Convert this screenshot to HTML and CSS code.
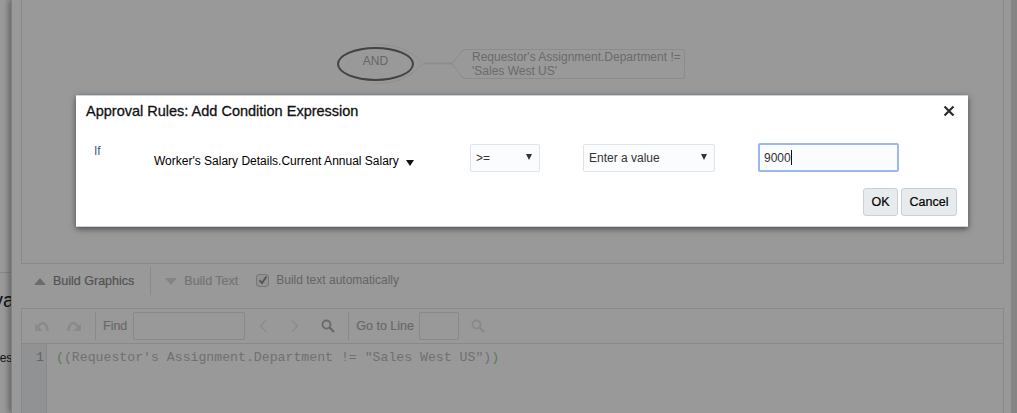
FILE: index.html
```html
<!DOCTYPE html>
<html lang="en">
<head>
<meta charset="utf-8">
<title>Approval Rules: Add Condition Expression</title>
<link rel="stylesheet" href="styles.css">
</head>
<body>
<div class="page">
  <aside class="side">
    <div class="side-rule"></div>
    <div class="side-heading">va</div>
    <div class="side-label">Des</div>
  </aside>
  <main class="panel">
    <section class="canvas">
      <svg class="edge" width="480" height="100" viewBox="22 0 480 100"><path d="M375 44.500 C398 44.500 410 50 423 63.500 C410 77 398 83.500 375 83.500" fill="none" stroke="#efefef" stroke-width="1"/><path d="M424 63.500 H452" fill="none" stroke="#e6edf6" stroke-width="2"/><path d="M464 50.500 L462 51 L452 63.500 L462 77 L464 78" fill="none" stroke="#e9e9e9" stroke-width="1"/></svg>
      <div class="node-and">AND</div>
      <div class="node-cond">Requestor's Assignment.Department != 'Sales West US'</div>
    </section>
    <div class="build-bar">
      <button class="build-btn"><span class="tri tri-up"></span>Build Graphics</button>
      <span class="bar-sep"></span>
      <button class="build-btn is-disabled"><span class="tri tri-down"></span>Build Text</button>
      <label class="auto-check">
        <span class="check-box"><svg width="10" height="10" viewBox="0 0 10 10"><path d="M1.500 5.200 L4 8 L8.500 1.500" fill="none" stroke="#8a8a8a" stroke-width="1.800"/></svg></span>
        Build text automatically
      </label>
    </div>
    <section class="editor">
      <div class="ed-tools">
        <svg class="ed-icon" width="14" height="12" viewBox="0 0 14 12"><path d="M3.500 7 C4.500 2 12 .500 12.500 11" fill="none" stroke="#e6e6e6" stroke-width="2.500"/><path d="M0 3.500 L0 11 L8 11 Z" fill="#e6e6e6"/></svg>
        <svg class="ed-icon ed-redo" width="14" height="12" viewBox="0 0 14 12"><path d="M10.500 7 C9.500 2 2 .500 1.500 11" fill="none" stroke="#e6e6e6" stroke-width="2.500"/><path d="M14 3.500 L14 11 L6 11 Z" fill="#e6e6e6"/></svg>
        <span class="ed-sep"></span>
        <span class="ed-label">Find</span>
        <span class="ed-input ed-input-find"></span>
        <svg class="ed-chev" width="10" height="14" viewBox="0 0 10 14"><path d="M8 1.500 L2.500 7 L8 12.500" fill="none" stroke="#e8e8e8" stroke-width="1.500"/></svg>
        <svg class="ed-chev ed-next" width="10" height="14" viewBox="0 0 10 14"><path d="M2 1.500 L7.500 7 L2 12.500" fill="none" stroke="#e8e8e8" stroke-width="1.500"/></svg>
        <svg class="ed-search" width="14" height="14" viewBox="0 0 14 14"><circle cx="5.500" cy="5.500" r="4" fill="none" stroke="#b0b0b0" stroke-width="1.800"/><path d="M8.500 8.500 L13 13" stroke="#b0b0b0" stroke-width="2.400"/></svg>
        <span class="ed-sep ed-sep-b"></span>
        <span class="ed-label">Go to Line</span>
        <span class="ed-input ed-input-line"></span>
        <svg class="ed-search ed-search-off" width="14" height="14" viewBox="0 0 14 14"><circle cx="5.500" cy="5.500" r="4" fill="none" stroke="#e4e4e4" stroke-width="1.800"/><path d="M8.500 8.500 L13 13" stroke="#e4e4e4" stroke-width="2.400"/></svg>
      </div>
      <div class="ed-body">
        <div class="gutter">1</div>
        <code class="code"><span class="paren">(</span>(Requestor's Assignment.Department != "Sales West US")<span class="paren">)</span></code>
      </div>
    </section>
  </main>
  <div class="right-strip"></div>
</div>

<div class="backdrop"></div>

<div class="dialog" role="dialog">
  <header class="dlg-head">
    <h1 class="dlg-title">Approval Rules: Add Condition Expression</h1>
    <svg class="dlg-close" width="12" height="12" viewBox="0 0 12 12"><path d="M1.500 1.500 L10.500 10.500 M10.500 1.500 L1.500 10.500" stroke="#2c2c2c" stroke-width="2.200"/></svg>
  </header>
  <div class="dlg-row">
    <span class="dlg-if">If</span>
    <span class="attr">Worker's Salary Details.Current Annual Salary<span class="attr-caret"></span></span>
    <span class="select select-op">&gt;=<span class="sel-caret"></span></span>
    <span class="select select-type">Enter a value<span class="sel-caret"></span></span>
    <span class="value-input">9000<span class="cursor"></span></span>
  </div>
  <div class="dlg-actions">
    <button class="btn btn-ok">OK</button>
    <button class="btn btn-cancel">Cancel</button>
  </div>
</div>
</body>
</html>
```
FILE: styles.css
```css
* { box-sizing: border-box; }
html, body { margin: 0; height: 413px; overflow: hidden; }
body { background: #fff; font-family: "Liberation Sans", Arial, sans-serif; font-size: 12px; color: #333; position: relative; }
button { font: inherit; }

.page { display: flex; height: 413px; width: 1017px; }
.side { width: 11px; flex: none; overflow: hidden; padding-top: 272px; }
.side-rule { height: 1px; background: #e3e3e3; }
.side-heading { font-size: 20px; line-height: 24px; margin: 15px 0 0 -7px; color: #222; width: 40px; }
.side-label { font-size: 12px; line-height: 14px; margin: 39px 0 0 -9px; color: #222; width: 40px; }

.panel { flex: 1; min-width: 0; padding: 0 7px 0 9px; border-left: 1px solid #d8d8d8; box-shadow: -3px 0 5px rgba(0,0,0,.3); background: #fff; }
.right-strip { width: 6px; flex: none; background: #dedede; }

.canvas { position: relative; height: 264px; border: 1px solid #e4e4e4; border-top: 0; }
.edge { position: absolute; left: 0; top: 0; }
.node-and { position: absolute; left: 315px; top: 47px; width: 77px; height: 34px; border: 2px solid #707070; border-radius: 50%; text-align: center; line-height: 24px; color: #aaa; font-size: 12px; }
.node-cond { position: absolute; left: 440px; top: 49px; width: 223px; height: 30px; padding: 0 0 0 9px; border: 1px solid #e9e9e9; border-left-color: transparent; border-radius: 3px; line-height: 14px; color: #b2b2b2; font-size: 12px; }

.build-bar { display: flex; align-items: center; height: 44px; padding: 0 0 10px 13px; }
.build-btn { display: flex; align-items: center; border: 0; background: none; padding: 0; color: #8a8a8a; font-size: 12.500px; -webkit-text-stroke: .2px currentColor; }
.tri { width: 0; height: 0; border-left: 6px solid transparent; border-right: 6px solid transparent; margin-right: 7px; }
.tri-up { border-bottom: 7px solid #b5b5b5; }
.tri-down { border-top: 7px solid #dcdcdc; }
.build-btn.is-disabled { color: #c2c2c2; }
.bar-sep { width: 1px; height: 28px; background: #e4e4e4; margin: 0 14px 0 16px; }
.auto-check { display: flex; align-items: center; margin-left: 18px; color: #a8a8a8; position: relative; top: -1px; }
.check-box { display: flex; align-items: center; justify-content: center; width: 13px; height: 13px; margin-right: 7px; border: 1px solid #c6c6c6; border-radius: 3px; background: #f4f4f4; }

.editor { height: 105px; border: 1px solid #e4e4e4; border-bottom: 0; }
.ed-tools { display: flex; align-items: center; height: 35px; border-bottom: 1px solid #e4e4e4; padding-left: 13px; }
.ed-icon { flex: none; }
.ed-redo { margin-left: 18px; }
.ed-sep { width: 1px; height: 28px; background: #e4e4e4; margin: 0 7px 0 14px; }
.ed-sep-b { margin: 0 7px 0 13px; }
.ed-label { color: #b0b0b0; font-size: 12.500px; -webkit-text-stroke: .2px currentColor; }
.ed-input { height: 28px; border: 1px solid #e4e4e4; border-radius: 2px; background: #fff; }
.ed-input-find { width: 112px; margin-left: 6px; }
.ed-input-line { width: 40px; margin-left: 5px; }
.ed-chev { margin-left: 13px; }
.ed-next { margin-left: 22px; }
.ed-search { margin-left: 21px; }
.ed-search-off { margin-left: 12px; }

.ed-body { display: flex; height: 69px; }
.gutter { width: 25px; flex: none; background: #f0f3f7; border-right: 1px solid #e4e4e4; text-align: right; padding-right: 2px; font: 13.200px/28px "Liberation Mono", monospace; color: #a8a8a8; }
.code { font: 13.200px/28px "Liberation Mono", monospace; color: #bbb; margin-left: 9px; white-space: pre; }
.paren { color: #8fd48f; }

.backdrop { position: absolute; inset: 0; background: rgba(0,0,0,.4); }

.dialog { position: absolute; left: 76px; top: 95px; width: 892px; height: 132px; background: #fff; border: 1px solid #c9d3de; border-width: 1px 0 1px 0; box-shadow: 0 2px 6px rgba(0,0,0,.5); padding: 0 10px; display: flex; flex-direction: column; }
.dlg-head { display: flex; align-items: center; justify-content: space-between; height: 30px; padding-right: 3px; }
.dlg-title { margin: 0; font-size: 14.500px; font-weight: 400; color: #111; -webkit-text-stroke: .3px currentColor; }
.dlg-row { display: flex; align-items: flex-start; margin-top: 18px; height: 28px; }
.dlg-if { width: 68px; padding-left: 8px; color: #4a6070; }
.attr { display: flex; align-items: center; width: 316px; margin-top: 10px; color: #000; }
.attr-caret { width: 0; height: 0; margin: 3px 0 0 7px; border-left: 4.500px solid transparent; border-right: 4.500px solid transparent; border-top: 6px solid #111; }
.select { display: flex; align-items: center; justify-content: space-between; height: 28px; padding: 0 7px 0 5px; border: 1px solid #dfe4ea; border-radius: 2px; background: #fbfcfd; color: #333; }
.select-op { width: 70px; }
.select-type { width: 132px; margin-left: 43px; }
.sel-caret { width: 0; height: 0; border-left: 3.500px solid transparent; border-right: 3.500px solid transparent; border-top: 6px solid #333; margin-top: -2px; }
.value-input { display: flex; align-items: center; width: 141px; height: 29px; margin: -1px 0 0 43px; padding-left: 4px; border: 2px solid #9ab8ec; border-radius: 2px; background: #fbfcfd; color: #333; }
.cursor { width: 1px; height: 15px; background: #111; }
.dlg-actions { display: flex; justify-content: flex-end; gap: 3px; margin-top: 16px; padding-right: 1px; }
.btn { height: 28px; padding: 0; border: 1px solid #c9d0d6; border-radius: 3px; background: #e7ebee; color: #000; font-size: 12.500px; -webkit-text-stroke: .2px currentColor; }
.btn-ok { width: 35px; }
.btn-cancel { width: 56px; }
```
